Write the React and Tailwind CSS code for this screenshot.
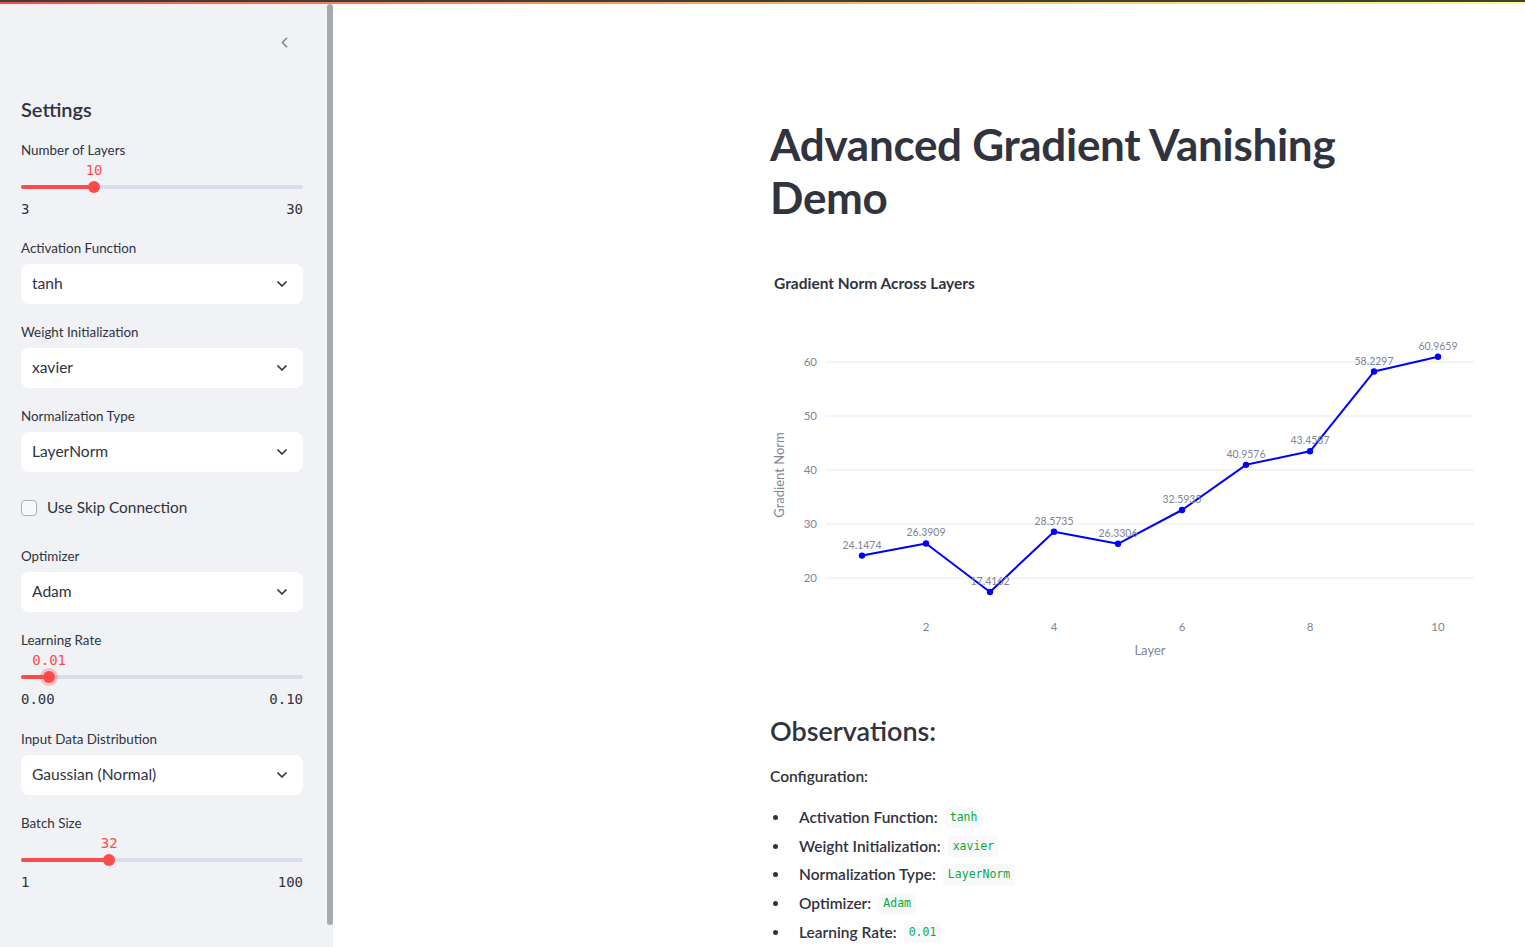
import { ChevronDown, ChevronLeft } from 'lucide-react';

const SANS = { fontFamily: '"Source Sans Pro", Lato, "Noto Sans", sans-serif' };

const layers = [24.1474, 26.3909, 17.4162, 28.5735, 26.3306, 32.5935, 40.9576, 43.4587, 58.2297, 60.9659];

const FieldLabel = ({ children }) => (
  <div className="h-[20px] text-[13.4px] leading-[20px] text-[#31333f]">{children}</div>
);

const Select = ({ value }) => (
  <div className="mt-[6px] h-[40px] bg-white rounded-lg flex items-center justify-between pl-[11px] pr-[13px]">
    <span className="text-[15.6px] text-[#31333f]">{value}</span>
    <ChevronDown size={16} strokeWidth={2.6} className="text-[#31333f]" />
  </div>
);

const Slider = ({ label, value, min, max, pct, focused = false }) => (
  <div>
    <FieldLabel>{label}</FieldLabel>
    <div className="relative h-[20px]">
      <span
        className="absolute top-0 -translate-x-1/2 text-[14px] leading-[20px] text-[#ff4b4b]"
        style={{ left: `${pct}%`, fontFamily: '"DejaVu Sans Mono", monospace' }}
      >
        {value}
      </span>
    </div>
    <div className="relative h-[12px] mt-[1px] flex items-center">
      <div className="w-full h-[4px] rounded-full bg-[#d9dde7]" />
      <div className="absolute left-0 h-[4px] rounded-full bg-[#ff4b4b]" style={{ width: `${pct}%` }} />
      {focused && (
        <div
          className="absolute top-1/2 w-[18px] h-[18px] -translate-x-1/2 -translate-y-1/2 rounded-full bg-[#ff4b4b]/30"
          style={{ left: `${pct}%` }}
        />
      )}
      <div
        className="absolute top-0 w-[12px] h-[12px] -translate-x-1/2 rounded-full bg-[#ff4b4b]"
        style={{ left: `${pct}%` }}
      />
    </div>
    <div
      className="mt-[6px] flex justify-between text-[14px] leading-[20px] text-[#31333f]"
      style={{ fontFamily: '"DejaVu Sans Mono", monospace' }}
    >
      <span>{min}</span>
      <span>{max}</span>
    </div>
  </div>
);

const Chart = () => {
  const px = (i) => 862 + 64 * i;
  const py = (v) => 578 - (v - 20) * 5.4;
  const pts = layers.map((v, i) => `${px(i)},${py(v)}`).join(' ');
  return (
    <svg width="704" height="410" viewBox="770 260 704 410" className="block" style={SANS}>
      <text x="774" y="289" fontSize="15.5" fontWeight="700" fill="#31333f">Gradient Norm Across Layers</text>
      {[60, 50, 40, 30, 20].map((t) => (
        <g key={t}>
          <line x1="826" x2="1474" y1={py(t)} y2={py(t)} stroke="#e6e9ef" strokeWidth="1" />
          <text x="817" y={py(t) + 4} fontSize="11.5" textAnchor="end" fill="#808495">{t}</text>
        </g>
      ))}
      {[2, 4, 6, 8, 10].map((t) => (
        <text key={t} x={px(t - 1)} y="631" fontSize="11.5" textAnchor="middle" fill="#808495">{t}</text>
      ))}
      <text x="1150" y="655" fontSize="13" textAnchor="middle" fill="#808495">Layer</text>
      <text x="0" y="0" fontSize="13" textAnchor="middle" fill="#808495" transform="translate(784 475) rotate(-90)">
        Gradient Norm
      </text>
      <polyline points={pts} fill="none" stroke="#0000ff" strokeWidth="2" strokeLinejoin="round" />
      {layers.map((v, i) => (
        <g key={i}>
          <circle cx={px(i)} cy={py(v)} r="3.2" fill="#0000ff" />
          <text x={px(i)} y={py(v) - 7} fontSize="10.5" textAnchor="middle" fill="#808495">{v.toFixed(4)}</text>
        </g>
      ))}
    </svg>
  );
};

const Code = ({ children }) => (
  <code
    className="ml-[7px] px-[5px] py-[2px] rounded bg-[#f8f9fb] text-[11.5px] text-[#09ab3b]"
    style={{ fontFamily: '"DejaVu Sans Mono", monospace' }}
  >
    {children}
  </code>
);

const config = [
  ['Activation Function:', 'tanh'],
  ['Weight Initialization:', 'xavier'],
  ['Normalization Type:', 'LayerNorm'],
  ['Optimizer:', 'Adam'],
  ['Learning Rate:', '0.01'],
];

export default function App() {
  return (
    <div className="w-[1525px] h-[947px] overflow-hidden bg-white text-[#31333f]" style={SANS}>
      <div className="h-[2px] bg-[#3b4039]" />
      <div className="h-[2px] bg-gradient-to-r from-[#ff4b4b] to-[#fffd80]" />
      <div className="flex h-[943px]">
        <aside className="w-[333px] flex bg-[#f0f2f6]">
          <div className="w-[327px] pl-[21px] pr-[24px]">
            <div className="h-[93px] pt-[30px] flex justify-end pr-[10px]">
              <ChevronLeft size={17} strokeWidth={2.2} className="text-[#7d808c]" />
            </div>
            <h2 className="text-[20px] leading-[24px] font-semibold">Settings</h2>
            <div className="mt-[19px]">
              <Slider label="Number of Layers" value="10" min="3" max="30" pct={25.93} />
            </div>
            <div className="mt-[19px]">
              <FieldLabel>Activation Function</FieldLabel>
              <Select value="tanh" />
            </div>
            <div className="mt-[18px]">
              <FieldLabel>Weight Initialization</FieldLabel>
              <Select value="xavier" />
            </div>
            <div className="mt-[18px]">
              <FieldLabel>Normalization Type</FieldLabel>
              <Select value="LayerNorm" />
            </div>
            <div className="mt-[24px] h-[24px] flex items-center gap-[10px]">
              <div className="w-[16px] h-[16px] rounded-[4px] border border-[#a9adb8] bg-[#f7f8fa]" />
              <span className="text-[15.4px]">Use Skip Connection</span>
            </div>
            <div className="mt-[26px]">
              <FieldLabel>Optimizer</FieldLabel>
              <Select value="Adam" />
            </div>
            <div className="mt-[18px]">
              <Slider label="Learning Rate" value="0.01" min="0.00" max="0.10" pct={10} focused />
            </div>
            <div className="mt-[20px]">
              <FieldLabel>Input Data Distribution</FieldLabel>
              <Select value="Gaussian (Normal)" />
            </div>
            <div className="mt-[18px]">
              <Slider label="Batch Size" value="32" min="1" max="100" pct={31.31} />
            </div>
          </div>
          <div className="w-[6px] h-[921px] rounded-full bg-[#a8a9b0]" />
        </aside>

        <main className="flex-1 pl-[437px]">
          <h1 className="mt-[114px] text-[44px] leading-[53px] font-bold tracking-[-0.3px]">
            Advanced Gradient Vanishing
            <br />
            Demo
          </h1>
          <div className="mt-[36px]">
            <Chart />
          </div>
          <h3 className="mt-[43px] text-[27px] leading-[36px] font-semibold">Observations:</h3>
          <p className="mt-[15px] text-[15.5px] leading-[24px] font-semibold">Configuration:</p>
          <ul className="mt-[15px]">
            {config.map(([k, v]) => (
              <li key={k} className="h-[28.75px] flex items-center text-[15.5px]">
                <span className="w-[5px] h-[5px] rounded-full bg-[#31333f] ml-[3px] mr-[21px]" />
                <span className="font-semibold">{k}</span>
                <Code>{v}</Code>
              </li>
            ))}
          </ul>
        </main>
      </div>
    </div>
  );
}
